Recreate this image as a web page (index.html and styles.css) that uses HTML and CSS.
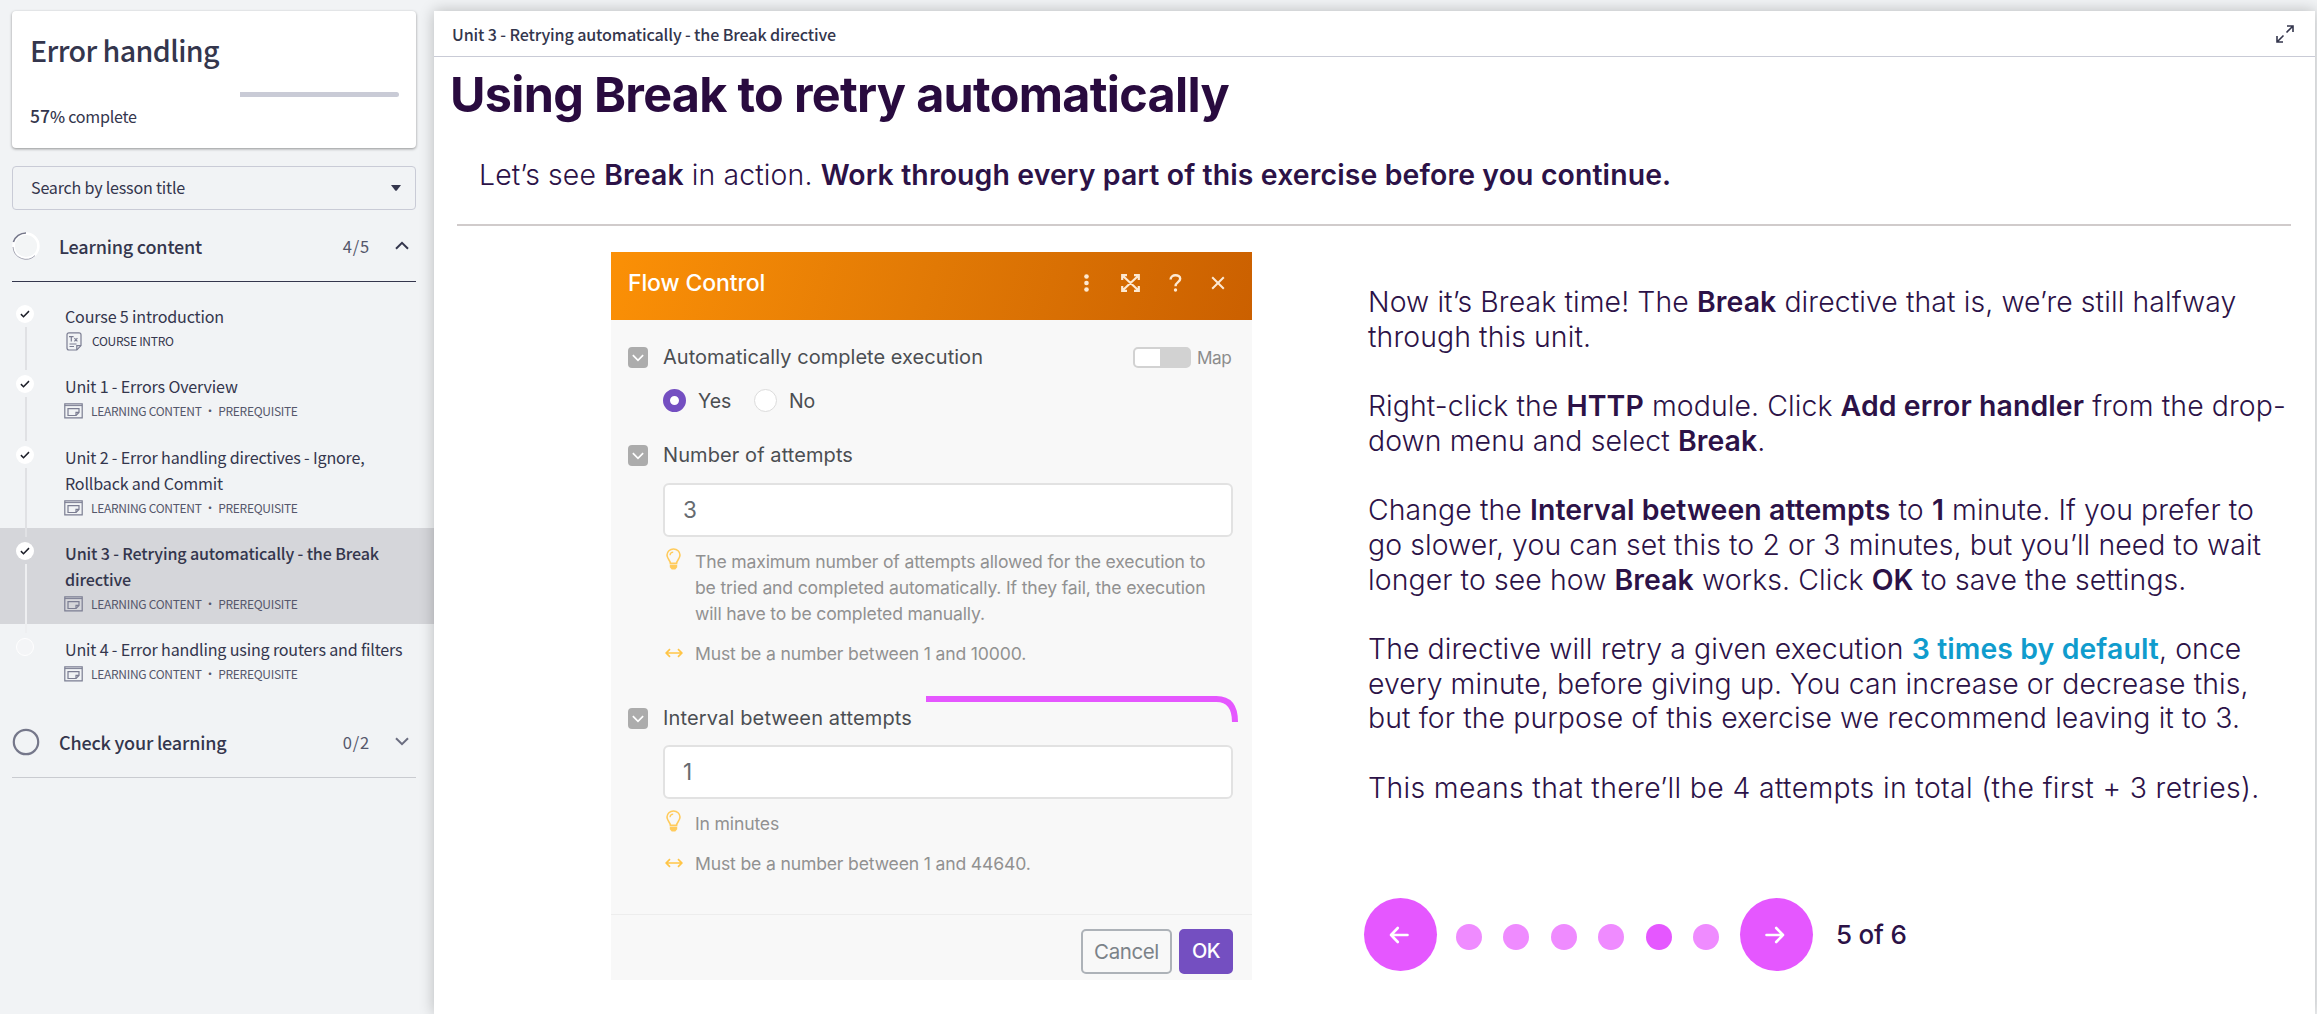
FILE: index.html
```html
<!DOCTYPE html>
<html lang="en">
<head>
<meta charset="utf-8">
<title>Error handling</title>
<link rel="stylesheet" href="styles.css">
</head>
<body>
<svg class="defs" width="0" height="0" aria-hidden="true">
  <symbol id="i-slide" viewBox="0 0 19 16"><g fill="none" stroke="#7b7d92" stroke-width="1.2"><path d="M.8.9h17.4v14H.8z"/><path d="M.8 2.6h17.4" stroke-width="1"/><path d="M4 5.6h11v3.9l-3 3H4z"/><path d="M15 9.4h-3v3"/></g></symbol>
  <symbol id="i-check" viewBox="0 0 10 8"><path d="M.9 4.1l2.6 2.6L9 1.1" fill="none" stroke="#1d1f29" stroke-width="1.5"/></symbol>
  <symbol id="i-down" viewBox="0 0 14 9"><path d="M1 1.2l6 6 6-6" fill="none" stroke="currentColor" stroke-width="2"/></symbol>
  <symbol id="i-bulb" viewBox="0 0 15 22"><g fill="none" stroke="#ffcb5c" stroke-width="1.6"><path d="M4.4 15.4C4.4 12.4 1 10.8 1 7a6.5 6 0 0 1 13 0c0 3.800-3.400 5.400-3.400 8.400z"/><path d="M4 7.200c.1-1.800 1.300-2.900 3.200-3" stroke-width="1.200"/><path d="M4.600 17.600h5.800v1.400l-1.500 1.600H6.100l-1.500-1.600z" fill="#ffcb5c"/></g></symbol>
  <symbol id="i-range" viewBox="0 0 18 10"><path d="M1.500 5h15M5 1.200L1.200 5 5 8.800M13 1.200L16.800 5 13 8.800" fill="none" stroke="#ffc547" stroke-width="1.700"/></symbol>
</svg>

<aside class="sidebar">
  <section class="course">
    <h1>Error handling</h1>
    <div class="progress"><div class="progress-rest"></div></div>
    <p><b>57</b><i>%</i> complete</p>
  </section>
  <div class="search"><span>Search by lesson title</span><svg width="10" height="6" viewBox="0 0 10 6"><path d="M0 0h10L6 5.300q-1 1-2 0z" fill="#34364d"/></svg></div>

  <div class="group open">
    <svg class="ring" width="28" height="28" viewBox="0 0 28 28"><circle cx="14" cy="14" r="12.400" fill="#f3f5f6" stroke="#fff" stroke-width="2.600"/><path d="M1.400 10A13.200 13.200 0 0 1 14 1" fill="none" stroke="#75778a" stroke-width="1.600"/><path d="M1 15a13 13 0 0 0 22 8.600" fill="none" stroke="#8f91a1" stroke-width=".8"/></svg>
    <h2>Learning content</h2><span class="count">4/5</span>
    <svg class="chev up" width="14" height="9"><use href="#i-down"/></svg>
  </div>

  <ul class="lessons">
    <li>
      <div class="rail"><span class="dot"><svg width="10" height="8"><use href="#i-check"/></svg></span><span class="line"></span></div>
      <div class="info"><h3>Course 5 introduction</h3>
        <p class="meta intro"><svg width="16" height="19" viewBox="0 0 16 19"><g fill="none" stroke="#7b7d92" stroke-width="1.200"><path d="M3 .8h10q2 0 2 2v10.800l-4.200 4.400H3q-2 0-2-2V2.800q0-2 2-2z"/><path d="M15 13.600h-4.200V18M3.500 12h7M3.500 14.500h4.500M3 4.600h4.600M5.300 4.600v4.800M8.400 6.200l3 3.200M11.400 6.200l-3 3.200"/></g></svg>COURSE INTRO</p></div>
    </li>
    <li>
      <div class="rail"><span class="dot"><svg width="10" height="8"><use href="#i-check"/></svg></span><span class="line"></span></div>
      <div class="info"><h3>Unit 1 - Errors Overview</h3>
        <p class="meta"><svg width="19" height="16"><use href="#i-slide"/></svg>LEARNING CONTENT · PREREQUISITE</p></div>
    </li>
    <li>
      <div class="rail"><span class="dot"><svg width="10" height="8"><use href="#i-check"/></svg></span><span class="line"></span></div>
      <div class="info"><h3>Unit 2 - Error handling directives - Ignore,<br>Rollback and Commit</h3>
        <p class="meta"><svg width="19" height="16"><use href="#i-slide"/></svg>LEARNING CONTENT · PREREQUISITE</p></div>
    </li>
    <li class="current">
      <div class="rail"><span class="dot"><svg width="10" height="8"><use href="#i-check"/></svg></span><span class="line"></span></div>
      <div class="info"><h3>Unit 3 - Retrying automatically - the Break<br>directive</h3>
        <p class="meta"><svg width="19" height="16"><use href="#i-slide"/></svg>LEARNING CONTENT · PREREQUISITE</p></div>
    </li>
    <li>
      <div class="rail"><span class="dot todo"></span></div>
      <div class="info"><h3>Unit 4 - Error handling using routers and filters</h3>
        <p class="meta"><svg width="19" height="16"><use href="#i-slide"/></svg>LEARNING CONTENT · PREREQUISITE</p></div>
    </li>
  </ul>

  <div class="group">
    <svg class="ring" width="28" height="28" viewBox="0 0 28 28"><circle cx="14" cy="14" r="12.200" fill="none" stroke="#75778a" stroke-width="2.200"/></svg>
    <h2>Check your learning</h2><span class="count">0/2</span>
    <svg class="chev" width="14" height="9"><use href="#i-down"/></svg>
  </div>
</aside>

<main class="player">
  <header class="bar"><span>Unit 3 - Retrying automatically - the Break directive</span>
    <svg width="18" height="18" viewBox="0 0 18 18"><path d="M11 1h6v6M17 1l-6.500 6.500M1 11v6h6M1 17l6.500-6.500" fill="none" stroke="#34364d" stroke-width="1.600"/></svg>
  </header>
  <h1 class="title">Using Break to retry automatically</h1>
  <p class="lead">Let’s see <b>Break</b> in action. <b>Work through every part of this exercise before you continue.</b></p>
  <hr>
  <div class="stage">
    <section class="dialog">
      <header><span>Flow Control</span>
        <svg class="a-dots" width="5" height="18" viewBox="0 0 5 18"><g fill="#fde9d2"><circle cx="2.500" cy="2.500" r="2.300"/><circle cx="2.500" cy="9" r="2.300"/><circle cx="2.500" cy="15.500" r="2.300"/></g></svg>
        <svg class="a-full" width="19" height="18" viewBox="0 0 19 18"><path d="M1.200 6V1.200H6M13 1.200h4.800V6M17.800 12v4.800H13M6 16.800H1.200V12M2 2l15 14M17 2L2 16" fill="none" stroke="#fde9d2" stroke-width="2.200"/></svg>
        <svg class="a-help" width="13" height="18" viewBox="0 0 13 18"><path d="M1.600 5.400c0-5.400 9.600-5.400 9.600-.6 0 3.400-4.700 3.300-4.700 7.400" fill="none" stroke="#fde9d2" stroke-width="2.400"/><circle cx="6.500" cy="16" r="1.700" fill="#fde9d2"/></svg>
        <svg class="a-close" width="14" height="14" viewBox="0 0 14 14"><path d="M1.200 1.200l11.600 11.600M12.800 1.200L1.200 12.800" stroke="#fde9d2" stroke-width="2"/></svg>
      </header>
      <div class="form">
        <div class="row"><span class="box"><svg width="12" height="8"><use href="#i-down"/></svg></span><label class="l1">Automatically complete execution</label><span class="toggle"></span><span class="map">Map</span></div>
        <div class="radios"><span class="radio on"></span><span class="yes">Yes</span><span class="radio"></span><span>No</span></div>
        <div class="row"><span class="box"><svg width="12" height="8"><use href="#i-down"/></svg></span><label class="l2">Number of attempts</label></div>
        <div class="input">3</div>
        <div class="hint"><svg class="bulb" width="15" height="22"><use href="#i-bulb"/></svg><p>The maximum number of attempts allowed for the execution to<br>be tried and completed automatically. If they fail, the execution<br>will have to be completed manually.</p></div>
        <div class="hint range"><svg width="18" height="10"><use href="#i-range"/></svg><p>Must be a number between 1 and 10000.</p></div>
        <div class="row third"><span class="box"><svg width="12" height="8"><use href="#i-down"/></svg></span><label class="l3">Interval between attempts</label></div>
        <div class="input">1</div>
        <div class="hint"><svg class="bulb" width="15" height="22"><use href="#i-bulb"/></svg><p>In minutes</p></div>
        <div class="hint range"><svg width="18" height="10"><use href="#i-range"/></svg><p>Must be a number between 1 and 44640.</p></div>
      </div>
      <footer><span class="btn">Cancel</span><span class="btn ok">OK</span></footer>
      <svg class="marker" width="312" height="30" viewBox="0 0 312 30"><path d="M0 4h290.500Q309 4 309 27" fill="none" stroke="#e557ff" stroke-width="6"/></svg>
    </section>
    <section class="copy">
      <p><span class="t1">Now it’s Break time! The <b>Break</b> directive that is, we’re still halfway</span><br><span class="t2">through this unit.</span></p>
      <p><span class="t3">Right-click the <b>HTTP</b> module. Click <b>Add error handler</b> from the drop-</span><br><span class="t4">down menu and select <b>Break</b>.</span></p>
      <p><span class="t5">Change the <b>Interval between attempts</b> to <b>1</b> minute. If you prefer to</span><br><span class="t6">go slower, you can set this to 2 or 3 minutes, but you’ll need to wait</span><br><span class="t7">longer to see how <b>Break</b> works. Click <b>OK</b> to save the settings.</span></p>
      <p><span class="t8">The directive will retry a given execution <b class="blue">3 times by default</b>, once</span><br><span class="t9">every minute, before giving up. You can increase or decrease this,</span><br><span class="t9">but for the purpose of this exercise we recommend leaving it to 3.</span></p>
      <p><span class="t11">This means that there’ll be 4 attempts in total (the first + 3 retries).</span></p>
      <nav class="pager">
        <span class="arrow"><svg width="20" height="18" viewBox="0 0 20 18"><path d="M18.500 9H2M8.800 2L2 9l6.800 7" fill="none" stroke="#fff" stroke-width="2.600" stroke-linecap="round" stroke-linejoin="round"/></svg></span>
        <span class="dots"><i></i><i></i><i></i><i></i><i class="on"></i><i></i></span>
        <span class="arrow"><svg width="20" height="18" viewBox="0 0 20 18"><path d="M1.500 9H18M11.200 2L18 9l-6.800 7" fill="none" stroke="#fff" stroke-width="2.600" stroke-linecap="round" stroke-linejoin="round"/></svg></span>
        <span class="pos">5 of 6</span>
      </nav>
    </section>
  </div>
</main>
</body>
</html>
```
FILE: styles.css
```css
*{box-sizing:border-box;margin:0;padding:0}
body{display:flex;width:2317px;height:1014px;overflow:hidden;background:#f1f3f5;color:#34364d;font-family:"Noto Sans CJK SC",sans-serif;white-space:nowrap}
svg{display:block;flex:none}
.defs{position:absolute}
h1,h2,h3{font-weight:500}

/* Sidebar */
.sidebar{width:434px;flex:none;padding-top:11px}
.course{width:404px;height:137px;margin-left:12px;padding:19px 17px 0 18px;background:#fff;border-radius:4px;box-shadow:0 1px 3px rgba(0,0,0,.4)}
.course h1{font-size:28.6px;line-height:40px;letter-spacing:-.581px}
.progress{display:flex;justify-content:flex-end;margin-top:22px;height:5px}
.progress-rest{width:159px;background:#c9cbd6;border-radius:0 3px 3px 0}
.course p{font-size:16.1px;line-height:24px;letter-spacing:-.25px;margin-top:7px}
.course b{font-weight:500;font-size:17.5px;letter-spacing:0}
.course i{font-style:normal;font-weight:500}
.search{display:flex;align-items:center;justify-content:space-between;width:404px;height:44px;margin:18px 0 0 12px;padding:0 14px 0 18px;border:1px solid #c9cbd6;border-radius:4px;font-size:16.1px;letter-spacing:-.21px}
.search span{padding-bottom:2px}
.group{display:flex;align-items:center;width:404px;height:72px;margin-left:12px;padding-right:7px;border-bottom:1px solid #c9cbd0}
.group.open{border-color:#34364d}
.ring{margin-right:19px}
.group h2{flex:1;font-size:18px;letter-spacing:-.19px}
.count{font-size:16.5px;letter-spacing:.8px;color:#55576b}
.chev{margin-left:25px;color:#6b6d80}
.up{transform:rotate(180deg);color:#34364d}
.lessons{list-style:none;padding-top:9px;margin-bottom:11px}
.lessons li{display:flex;padding:14px 0 10px 16px;height:71px}
.lessons li:nth-child(1){height:70px}
.lessons li:nth-child(3),.lessons li.current{height:96px}
.current{background:#d5d6da}
.rail{width:18px;margin-right:31px;display:flex;flex-direction:column;align-items:center}
.dot{display:flex;flex:none;align-items:center;justify-content:center;width:18px;height:18px;border-radius:50%;background:#fff}
.dot.todo{background:#f4f5f7;border:1px solid #fff}
.line{width:2px;margin:4px 0 -19px 1px;flex:1;background:#e0e1e4}
.current .line{background:#eeeff1}
.info{margin-top:-1px}
.info h3{font-weight:400;font-size:16.1px;line-height:26px;letter-spacing:-.17px;margin-top:-1px}
.current h3{font-weight:500;letter-spacing:-.15px}
.meta{display:flex;align-items:center;font-size:12px;line-height:24px;letter-spacing:-.29px;gap:8px;height:24px;margin-left:-1px;color:#55576b}
.intro{gap:10px;padding-left:2px;color:#34364d}
.info h3+.intro svg{margin-top:1px}

/* Player */
.player{width:1881px;flex:none;margin-top:11px;height:1003px;background:#fff;box-shadow:0 0 14px rgba(0,0,0,.24);color:#2c1247;font-family:Inter,sans-serif}
.bar{display:flex;align-items:center;justify-content:space-between;height:46px;padding:0 21px 0 18px;border-bottom:1px solid #c9cbd6;color:#34364d;font-family:"Noto Sans CJK SC",sans-serif;font-weight:500;font-size:16.1px;letter-spacing:-.136px}
.title{margin:8px 0 0 16px;font-weight:700;font-size:48.5px;line-height:60px;letter-spacing:-.7px;color:#290b3f}
.lead{margin:32px 0 0 45px;font-weight:300;font-size:28.4px;line-height:35px;letter-spacing:.13px}
.lead b,.copy b{font-weight:600}
hr{height:2px;margin:32px 24px 0 23px;border:0;background:#d0cbcb}
.stage{display:flex}

/* Dialog */
.dialog{position:relative;width:641px;height:728px;flex:none;margin:26px 0 0 177px;background:#f8f8f8;color:#4b4e52}
.dialog>header{display:flex;align-items:center;height:68px;padding:0 27px 6px 17px;background:linear-gradient(106deg,#fb9006 0%,#e17905 50%,#cb6000 100%);color:#fff;font-size:23px;font-weight:450;letter-spacing:-.12px}
.dialog>header span{flex:1}
.a-dots{margin-right:32px}.a-full{margin-right:29px}.a-help{margin-right:29px}
.form{height:594px;padding:27px 19px 0 17px}
.row{display:flex;align-items:center;height:21px;font-size:20px;line-height:21px}
.box{display:flex;align-items:center;justify-content:center;width:20px;height:21px;margin-right:15px;border-radius:4px;background:#acacac;color:#fff}
.box svg{width:12px;height:8px}
.row label{flex:1}
.l1{letter-spacing:.04px}.l2{letter-spacing:.085px}.l3{letter-spacing:.146px}
.toggle{width:58px;height:21px;border:2px solid #d2d2d2;border-radius:5px;background:linear-gradient(90deg,#fff 25px,#d2d2d2 25px)}
.map{margin-left:6px;width:36px;font-size:17.2px;letter-spacing:-.5px;color:#8c8c8c}
.radios{display:flex;align-items:center;height:23px;margin:21px 0 33px 35px;font-size:19.5px;letter-spacing:-.1px}
.radio{width:23px;height:23px;margin-right:12px;border:1px solid #dcdcdc;border-radius:50%;background:#fff}
.radio.on{border:7px solid #744fc1}
.yes{width:56px}
.input{height:54px;margin:17px 0 12px 35px;padding-left:18px;border:2px solid #e2e2e2;border-radius:6px;background:#fff;font-size:22.5px;line-height:50px;color:#666b70}
.hint{display:flex;margin-left:38px;font-size:17.6px;line-height:26px;letter-spacing:-.165px;color:#919191}
.bulb{margin:-1px 14px 0 0}
.range{margin-top:14px;margin-left:37px}
.range svg{margin:7px 12px 0 0}
.third{margin-top:41px}
.third+.input{margin-top:16px}
.dialog footer{display:flex;justify-content:flex-end;gap:7px;height:66px;padding:14px 19px 0 0;border-top:1px solid #ededed}
.btn{display:flex;align-items:center;justify-content:center;width:91px;height:45px;border:2px solid #adb2b8;border-radius:5px;font-size:20.5px;letter-spacing:-.4px;color:#7b8288;padding-bottom:1px}
.ok{width:54px;border-color:#744fc1;background:#744fc1;color:#fff;font-weight:500;font-size:20px;letter-spacing:-.6px}
.marker{position:absolute;left:315px;top:443px}

/* Instructions */
.copy{margin:59px 0 0 116px;font-weight:300;font-size:28.4px;line-height:34.7px;letter-spacing:.1px}
.copy p+p{margin-top:34.7px}
.t11{letter-spacing:.353px}
.blue{color:#109ccd}
.pager{display:flex;align-items:center;height:73px;margin:93px 0 0 -4px}
.arrow{display:flex;align-items:center;justify-content:center;width:73px;height:73px;border-radius:50%;background:#e557ff;padding-right:3px}
.dots{display:flex;gap:21.4px;margin:4px 21px 0 19px}
.dots i{width:26px;height:26px;border-radius:50%;background:#ef8bff}
.dots .on{background:#e557ff}
.pos{margin-left:23px;font-weight:500;font-size:26px;letter-spacing:-.2px}
```
